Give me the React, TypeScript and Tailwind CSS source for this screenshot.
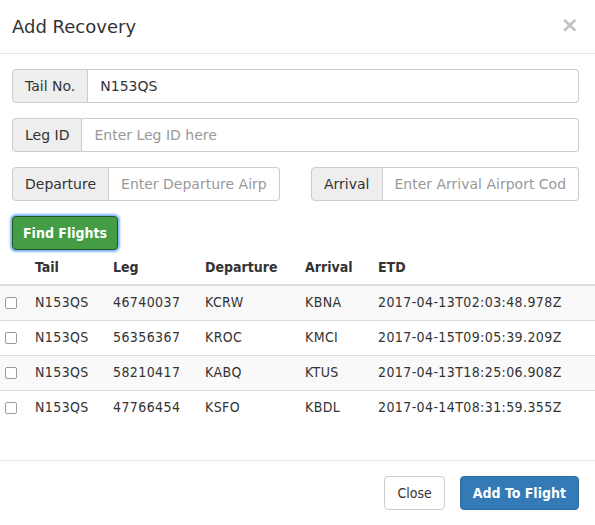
const flights = [
  { tail: "N153QS", leg: "46740037", dep: "KCRW", arr: "KBNA", etd: "2017-04-13T02:03:48.978Z" },
  { tail: "N153QS", leg: "56356367", dep: "KROC", arr: "KMCI", etd: "2017-04-15T09:05:39.209Z" },
  { tail: "N153QS", leg: "58210417", dep: "KABQ", arr: "KTUS", etd: "2017-04-13T18:25:06.908Z" },
  { tail: "N153QS", leg: "47766454", dep: "KSFO", arr: "KBDL", etd: "2017-04-14T08:31:59.355Z" },
];

const condensed = { fontFamily: '"DejaVu Sans Condensed", "DejaVu Sans", sans-serif' };

function InputGroup({ label, value, placeholder }: { label: string; value?: string; placeholder?: string }) {
  return (
    <div className="flex h-[34px] w-full">
      <span className="flex items-center whitespace-nowrap rounded-l-[4px] border border-[#ccc] bg-[#eee] px-3 text-[14px] text-[#333]">
        {label}
      </span>
      <input
        className="min-w-0 flex-1 rounded-r-[4px] border border-l-0 border-[#ccc] bg-white px-3 text-[14px] text-[#333] outline-none placeholder:text-[#999]"
        defaultValue={value}
        placeholder={placeholder}
      />
    </div>
  );
}

export default function App() {
  return (
    <div
      className="h-[525px] w-[595px] overflow-hidden bg-white text-[14px] text-[#333]"
      style={{ fontFamily: '"DejaVu Sans", Verdana, sans-serif' }}
    >
      {/* header */}
      <div className="flex h-[54px] items-center justify-between border-b border-[#e5e5e5] pl-3 pr-4">
        <h4 className="text-[18px] leading-none text-[#333]">Add Recovery</h4>
        <button className="-mt-[4px] text-[22px] font-bold leading-none text-[#c2c2c2]">×</button>
      </div>

      {/* body */}
      <div className="pt-[15px]">
        <div className="flex flex-col gap-[15px] pl-3 pr-4">
          <InputGroup label="Tail No." value="N153QS" />
          <InputGroup label="Leg ID" placeholder="Enter Leg ID here" />
          <div className="grid grid-cols-2 gap-[31px]">
            <InputGroup label="Departure" placeholder="Enter Departure Airport Code" />
            <InputGroup label="Arrival" placeholder="Enter Arrival Airport Code" />
          </div>
          <div>
            <button
              className="h-[34px] rounded-[4px] border border-[#255625] bg-[#449d44] px-[10px] text-[14px] font-bold text-white shadow-[0_0_2px_2px_rgba(90,160,250,0.75)]"
              style={condensed}
            >
              Find Flights
            </button>
          </div>
        </div>

        <table className="mb-[35px] w-full table-fixed border-collapse text-left" style={condensed}>
          <colgroup>
            <col className="w-[27px]" />
            <col className="w-[78px]" />
            <col className="w-[92px]" />
            <col className="w-[100px]" />
            <col className="w-[73px]" />
            <col />
          </colgroup>
          <thead>
            <tr className="h-[35px] border-b-2 border-[#ddd]">
              <th />
              <th className="px-2 font-bold">Tail</th>
              <th className="px-2 font-bold">Leg</th>
              <th className="px-2 font-bold">Departure</th>
              <th className="px-2 font-bold">Arrival</th>
              <th className="px-2 font-bold">ETD</th>
            </tr>
          </thead>
          <tbody className="tracking-[0.4px]">
            {flights.map((f, i) => (
              <tr key={f.leg} className={`h-[35px] border-t border-[#ddd] first:border-t-0 ${i % 2 === 0 ? "bg-[#f9f9f9]" : "bg-white"}`}>
                <td className="pl-[5px]">
                  <span className="block h-[12px] w-[12px] rounded-[2px] border border-[#9a9a9a] bg-white" />
                </td>
                <td className="px-2">{f.tail}</td>
                <td className="px-2">{f.leg}</td>
                <td className="px-2">{f.dep}</td>
                <td className="px-2">{f.arr}</td>
                <td className="whitespace-nowrap px-2">{f.etd}</td>
              </tr>
            ))}
          </tbody>
        </table>
      </div>

      {/* footer */}
      <div className="flex justify-end gap-[15px] border-t border-[#e5e5e5] pb-[15px] pl-3 pr-4 pt-[15px]">
        <button
          className="h-[34px] rounded-[4px] border border-[#ccc] bg-white px-3 text-[14px] text-[#333]"
          style={condensed}
        >
          Close
        </button>
        <button
          className="h-[34px] rounded-[4px] border border-[#2e6da4] bg-[#337ab7] px-3 text-[14px] font-bold text-white"
          style={condensed}
        >
          Add To Flight
        </button>
      </div>
    </div>
  );
}
